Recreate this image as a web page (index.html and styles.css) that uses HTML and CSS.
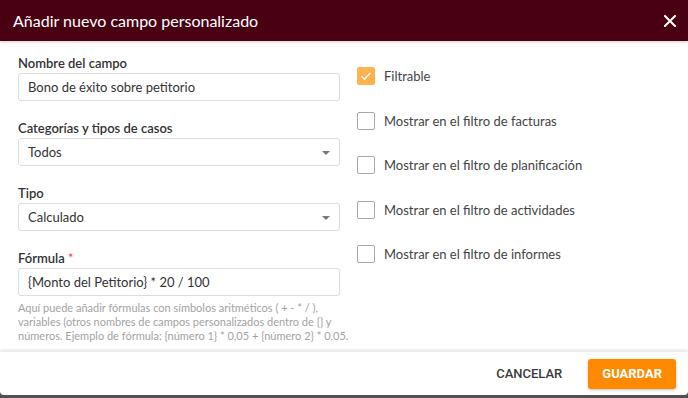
FILE: index.html
```html
<!DOCTYPE html>
<html lang="es">
<head>
<meta charset="utf-8">
<title>Añadir nuevo campo personalizado</title>
<link rel="stylesheet" href="styles.css">
</head>
<body>
<div class="dialog">
  <header class="header">
    <h1 class="title">Añadir nuevo campo personalizado</h1>
    <button class="close" aria-label="Cerrar">
      <svg width="12" height="12" viewBox="0 0 12 12"><path d="M1 1L11 11M11 1L1 11" stroke="#fff" stroke-width="2" stroke-linecap="square"/></svg>
    </button>
  </header>
  <main class="body">
    <div class="col-left">
      <div class="field">
        <label class="label">Nombre del campo</label>
        <div class="input">Bono de éxito sobre petitorio</div>
      </div>
      <div class="field">
        <label class="label">Categorías y tipos de casos</label>
        <div class="input select">Todos<span class="caret"></span></div>
      </div>
      <div class="field">
        <label class="label">Tipo</label>
        <div class="input select">Calculado<span class="caret"></span></div>
      </div>
      <div class="field">
        <label class="label">Fórmula <span class="req">*</span></label>
        <div class="input">{Monto del Petitorio} * 20 / 100</div>
        <p class="help">Aquí puede añadir fórmulas con símbolos aritméticos ( + - * / ),<br>variables (otros nombres de campos personalizados dentro de {} y<br>números. Ejemplo de fórmula: {número 1} * 0,05 + {número 2} * 0,05.</p>
      </div>
    </div>
    <div class="col-right">
      <div class="check-row">
        <span class="box checked"><svg width="12" height="10" viewBox="0 0 12 10"><path d="M1.5 5.2L4.5 8.2L10.5 1.8" fill="none" stroke="#fff" stroke-width="1.4"/></svg></span>
        <span class="check-label">Filtrable</span>
      </div>
      <div class="check-row"><span class="box"></span><span class="check-label">Mostrar en el filtro de facturas</span></div>
      <div class="check-row"><span class="box"></span><span class="check-label">Mostrar en el filtro de planificación</span></div>
      <div class="check-row"><span class="box"></span><span class="check-label">Mostrar en el filtro de actividades</span></div>
      <div class="check-row"><span class="box"></span><span class="check-label">Mostrar en el filtro de informes</span></div>
    </div>
  </main>
  <footer class="footer">
    <button class="btn btn-text">Cancelar</button>
    <button class="btn btn-primary">Guardar</button>
  </footer>
</div>
</body>
</html>
```

FILE: styles.css
```css
* { box-sizing: border-box; }
html, body { margin: 0; padding: 0; }
body {
  background: #505050;
  font-family: Lato, "Noto Sans", sans-serif;
  color: #333;
  width: 688px;
  height: 398px;
  overflow: hidden;
}
.dialog {
  height: 395px;
  background: #fff;
  border-radius: 0 0 4px 4px;
  display: flex;
  flex-direction: column;
  overflow: hidden;
}
.header {
  height: 41px;
  flex: none;
  background: #4a0013;
  display: flex;
  align-items: center;
  justify-content: space-between;
  padding: 0 12px 0 13px;
  box-shadow: 0 1px 3px rgba(0,0,0,0.2);
  position: relative;
  z-index: 1;
}
.title {
  margin: 0;
  font-size: 16px;
  font-weight: 400;
  color: #fff;
  line-height: 20px;
  padding-top: 1px;
}
.close {
  background: none;
  border: 0;
  padding: 0;
  width: 12px;
  height: 12px;
  display: flex;
  cursor: pointer;
}
.body {
  flex: 1 1 0;
  min-height: 0;
  overflow: hidden;
  display: flex;
  padding: 13px 0 0 18px;
}
.col-left {
  width: 322px;
  flex: none;
}
.field { margin-bottom: 18px; }
.label {
  display: block;
  font-size: 13px;
  font-weight: 600;
  line-height: 18px;
  color: #333;
  margin-bottom: 1px;
}
.req { color: #e0434b; font-weight: 400; }
.input {
  height: 28px;
  border: 1px solid #ddd;
  border-radius: 3px;
  padding: 0 9px;
  font-size: 13px;
  line-height: 26px;
  color: #333;
  position: relative;
}
.select { padding-right: 28px; }
.caret {
  position: absolute;
  right: 9px;
  top: 12px;
  width: 0;
  height: 0;
  border-left: 4px solid transparent;
  border-right: 4px solid transparent;
  border-top: 4px solid #777;
}
.help {
  margin: 5px -20px 0 0;
  font-size: 11px;
  line-height: 14px;
  color: #a3a3a3;
  white-space: nowrap;
}
.col-right {
  margin-left: 17px;
  padding-top: 13px;
  display: flex;
  flex-direction: column;
  gap: 26.5px;
}
.check-row {
  display: flex;
  align-items: center;
  height: 18px;
}
.box {
  width: 18px;
  height: 18px;
  border: 1.5px solid #a8a8a8;
  border-radius: 2px;
  margin-right: 9px;
  display: flex;
  align-items: center;
  justify-content: center;
  flex: none;
}
.box.checked {
  background: #ffb24f;
  border-color: #ffb24f;
}
.check-label {
  font-size: 13px;
  color: #444;
}
.footer {
  height: 44px;
  flex: none;
  display: flex;
  align-items: center;
  justify-content: flex-end;
  padding: 0 12px 0 0;
  box-shadow: 0 -1px 3px rgba(0,0,0,0.12);
  border-top: 1px solid #eee;
  gap: 12px;
}
.btn {
  font-family: Roboto, sans-serif;
  font-size: 13px;
  font-weight: 500;
  text-transform: uppercase;
  letter-spacing: 0;
  border: 0;
  border-radius: 3px;
  height: 30px;
  padding: 0 14px;
  cursor: pointer;
}
.btn-text { background: none; color: #3a3a3a; }
.btn-primary {
  background: #ff8a00;
  color: #fff;
  font-weight: 700;
  box-shadow: 0 1px 3px rgba(0,0,0,0.25);
}
```
